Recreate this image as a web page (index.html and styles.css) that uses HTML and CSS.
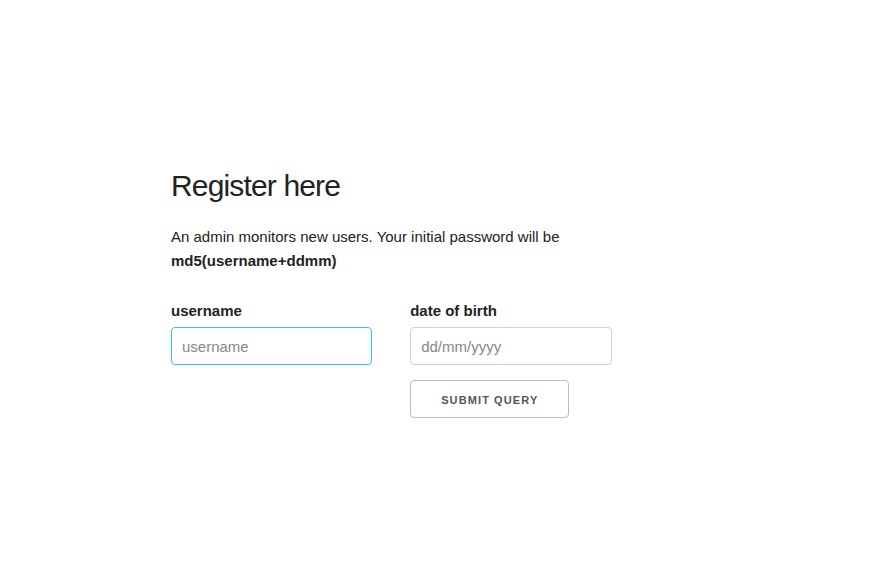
FILE: index.html
```html
<!DOCTYPE html>
<html>
<head>
<meta charset="utf-8">
<title>Register</title>
<link rel="stylesheet" href="styles.css">
</head>
<body>
<div class="page">
  <h3 class="title">Register here</h3>
  <p class="intro">An admin monitors new users. Your initial password will be <b>md5(username+ddmm)</b></p>
  <form class="row">
    <div class="col">
      <label class="label" for="username">username</label>
      <input class="field field-focus" id="username" type="text" placeholder="username" autofocus>
    </div>
    <div class="col">
      <label class="label" for="dob">date of birth</label>
      <input class="field field-wide" id="dob" type="text" placeholder="dd/mm/yyyy">
      <input class="button" type="submit" value="Submit Query">
    </div>
  </form>
</div>
</body>
</html>
```

FILE: styles.css
```css
html, body {
  margin: 0;
  padding: 0;
  background: #fff;
}
body {
  font-family: "Liberation Sans", Arial, sans-serif;
  font-size: 15px;
  line-height: 1.6;
  color: #222;
}
.page {
  width: 460px;
  margin-left: 171px;
  padding-top: 166px;
}
.title {
  margin: 0 0 20px 0;
  font-size: 30px;
  line-height: 1.3;
  font-weight: 400;
  letter-spacing: -0.85px;
}
.intro {
  margin: 0 0 26px 0;
}
.intro b {
  font-weight: 700;
}
.row {
  display: flex;
  gap: 4%;
}
.col {
  width: 48%;
  display: flex;
  flex-direction: column;
  align-items: flex-start;
}
.label {
  display: block;
  font-weight: 700;
  margin-bottom: 4px;
}
.field {
  box-sizing: border-box;
  width: 201px;
  height: 38px;
  padding: 6px 10px;
  border: 1px solid #d1d1d1;
  border-radius: 4px;
  background: #fff;
  font-family: "Liberation Sans", Arial, sans-serif;
  font-size: 15px;
  color: #222;
  margin: 0 0 15px 0;
  outline: none;
  box-shadow: none;
}
.field-wide {
  width: 202px;
}
.field::placeholder {
  color: #888;
}
.field-focus,
.field:focus {
  border-color: #33c3f0;
}
.button {
  box-sizing: border-box;
  height: 38px;
  padding: 0 30px;
  margin: 0;
  color: #555;
  background: transparent;
  border: 1px solid #bbb;
  border-radius: 4px;
  font-family: "Liberation Sans", Arial, sans-serif;
  font-size: 11px;
  font-weight: 700;
  line-height: 38px;
  letter-spacing: 1.1px;
  text-transform: uppercase;
  cursor: pointer;
}
```
